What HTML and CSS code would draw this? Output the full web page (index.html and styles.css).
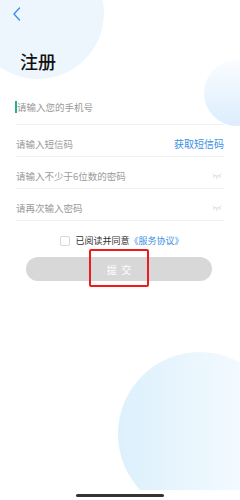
FILE: index.html
```html
<!DOCTYPE html>
<html lang="zh-CN">
<head>
  <meta charset="UTF-8">
  <meta name="viewport" content="width=device-width, initial-scale=1.0">
  <title>注册</title>
  <link rel="stylesheet" href="styles.css">
</head>
<body>
  <div class="screen">
    <div class="bubble bubble-top"></div>
    <div class="bubble bubble-side"></div>
    <div class="bubble-clip"><div class="bubble bubble-bottom"></div></div>

    <div class="content">
      <div class="topbar">
        <svg class="back" width="10" height="16" viewBox="0 0 10 16">
          <path d="M7.5 2 L2 8 L7.5 14" fill="none" stroke="#3f8fe8" stroke-width="1.4" stroke-linecap="round" stroke-linejoin="round"/>
        </svg>
      </div>

      <h1 class="title">注册</h1>

      <div class="form">
        <div class="field field-first">
          <span class="cursor"></span>
          <span class="placeholder">请输入您的手机号</span>
        </div>
        <div class="field">
          <span class="placeholder">请输入短信码</span>
          <span class="sms">获取短信码</span>
        </div>
        <div class="field">
          <span class="placeholder">请输入不少于6位数的密码</span>
          <svg class="eye" width="10" height="6" viewBox="0 0 10 6">
            <path d="M1 1.5 Q5 5 9 1.5 M2.5 3 L1.8 4.3 M5 4 L5 5.4 M7.5 3 L8.2 4.3" fill="none" stroke="#d4d4d4" stroke-width="0.9" stroke-linecap="round"/>
          </svg>
        </div>
        <div class="field">
          <span class="placeholder">请再次输入密码</span>
          <svg class="eye" width="10" height="6" viewBox="0 0 10 6">
            <path d="M1 1.5 Q5 5 9 1.5 M2.5 3 L1.8 4.3 M5 4 L5 5.4 M7.5 3 L8.2 4.3" fill="none" stroke="#d4d4d4" stroke-width="0.9" stroke-linecap="round"/>
          </svg>
        </div>
      </div>

      <label class="agree">
        <span class="box"></span>
        <span>已阅读并同意<a class="link">《服务协议<span class="close">》</span></a></span>
      </label>

      <div class="submit-wrap">
        <button class="submit">提&nbsp;&nbsp;交</button>
        <div class="highlight"></div>
      </div>
    </div>

    <div class="home-bar"></div>
  </div>
</body>
</html>
```
FILE: styles.css
```css
html {
  box-sizing: border-box;
}
*, *:before, *:after {
  box-sizing: inherit;
}
body { margin: 0; background: #fff; font-family: "Noto Sans CJK SC", "Noto Sans", sans-serif; }
.screen { position: relative; width: 240px; height: 500px; overflow: hidden; background: #fff; }

.bubble { position: absolute; border-radius: 50%; }
.bubble-top { left: -28px; top: -53px; width: 132px; height: 132px; background: #eef6fd; }
.bubble-side { left: 204px; top: 60px; width: 66px; height: 66px; background: linear-gradient(180deg, #fafdff 0%, #dcedfd 100%); }
.bubble-clip { position: absolute; left: 0; top: 0; width: 240px; height: 490px; overflow: hidden; }
.bubble-bottom { left: 118px; top: 352px; width: 164px; height: 164px; background: linear-gradient(90deg, #dcf0fc 0%, #eef8fe 60%, #fbfdff 100%); }

.content { position: relative; padding: 0 16px; }
.topbar { height: 28px; display: flex; align-items: center; }
.back { margin-left: -4px; }

.title { margin: 20px 0 0 4px; font-size: 18px; font-weight: 500; color: #111; line-height: 26px; }

.form { margin-top: 15px; }
.field { display: flex; align-items: flex-end; height: 32px; padding-bottom: 5px; border-bottom: 1px solid #f2f2f2; font-size: 9.5px; line-height: 14px; color: #9a9a9a; }
.field-first { height: 36px; padding-bottom: 10px; }
.placeholder { flex: 1; }
.cursor { width: 2px; height: 12px; margin: 0 0 1px -1px; background: #27b08d; }
.sms { color: #3a8fe3; font-size: 10px; }
.eye { margin: 0 2px 4px 0; }

.agree { display: flex; align-items: center; justify-content: center; margin-top: 13px; font-size: 9px; line-height: 14px; color: #333; }
.box { width: 10px; height: 10px; border: 1px solid #d8d8d8; border-radius: 2px; margin-right: 5px; background: #fff; }
.link { color: #3a8fe3; }
.link .close { letter-spacing: -4px; }

.submit-wrap { position: relative; margin: 9px 12px 0 10px; }
.submit { display: block; width: 100%; height: 24px; border: 0; border-radius: 12px; background: #d8d8d8; color: #fff; font-family: inherit; font-size: 10px; }
.highlight { position: absolute; left: 63px; top: -8px; width: 60px; height: 38px; border: 2px solid #ec1c1c; border-radius: 2px; }

.home-bar { position: absolute; left: 76px; bottom: 3px; width: 88px; height: 3px; border-radius: 2px; background: #333; }
```
